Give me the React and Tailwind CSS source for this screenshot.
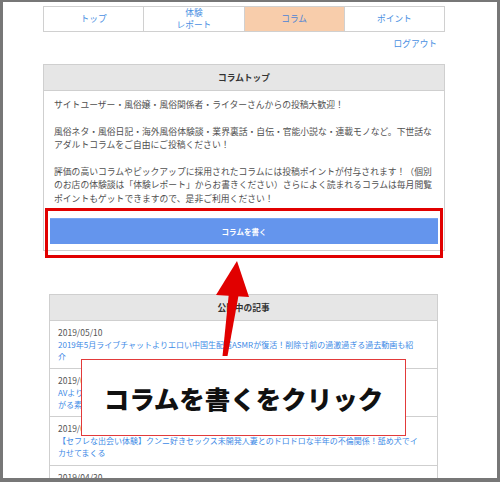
import React from "react";

const jp = "font-['Noto_Sans_CJK_JP','Noto_Sans',sans-serif]";

function Tab({ children, active, last }) {
  return (
    <div
      className={`flex-1 flex flex-col items-center justify-center text-[8.7px] leading-[12.5px] ${
        active ? "bg-[#f8cdab] text-[#4d84d6]" : "bg-white text-[#4a90e2]"
      } ${last ? "" : "border-r border-[#d0d0d0]"}`}
    >
      {children}
    </div>
  );
}

function Item({ date, lines }) {
  return (
    <div className="px-[8px] py-[6px] border-b border-[#cfcfcf] text-[8px] leading-[11.7px]">
      <div className="text-[#555] text-[8.5px]">{date}</div>
      <div className="text-[#3d8ae6] whitespace-nowrap">
        {lines.map((l, i) => (
          <div key={i}>{l}</div>
        ))}
      </div>
    </div>
  );
}

export default function App() {
  return (
    <div className={`relative w-[500px] h-[482px] overflow-hidden bg-[#777] pt-[2px] px-[3px] pb-[4px] ${jp}`}>
      <div className="bg-white h-full overflow-hidden">
        {/* tabs */}
        <div className="ml-[40px] mt-[4px] w-[402px] h-[26px] flex border border-[#d0d0d0]">
          <Tab>トップ</Tab>
          <Tab>
            <span>体験</span>
            <span>レポート</span>
          </Tab>
          <Tab active>コラム</Tab>
          <Tab last>ポイント</Tab>
        </div>

        <div className="ml-[40px] w-[402px] mt-[6px] h-[12px] flex justify-end pr-[8px] text-[8.7px] leading-[12px] text-[#4a90e2]">
          ログアウト
        </div>

        {/* panel 1 */}
        <div className="ml-[40px] w-[402px] mt-[14px] border border-[#cfcfcf]">
          <div className="h-[26px] bg-[#e6e6e6] border-b border-[#cfcfcf] flex items-center justify-center text-[8.7px] font-bold text-[#333]">
            コラムトップ
          </div>
          <div className="px-[6px] pt-[7px] pb-[6px]">
            <div className="px-[4px] text-[8.8px] leading-[13.4px] text-[#505050] whitespace-nowrap">
              <div>サイトユーザー・風俗嬢・風俗関係者・ライターさんからの投稿大歓迎！</div>
              <div className="h-[13.4px]"></div>
              <div>風俗ネタ・風俗日記・海外風俗体験談・業界裏話・自伝・官能小説な・連載モノなど。下世話な</div>
              <div>アダルトコラムをご自由にご投稿ください！</div>
              <div className="h-[13.4px]"></div>
              <div>評価の高いコラムやピックアップに採用されたコラムには投稿ポイントが付与されます！（個別</div>
              <div>のお店の体験談は「体験レポート」からお書きください）さらによく読まれるコラムは毎月閲覧</div>
              <div>ポイントもゲットできますので、是非ご利用ください！</div>
            </div>
            <div className="mt-[13px] h-[26px] bg-[#6495ed] border-t border-[#79a6f2] flex items-center justify-center text-white text-[7.5px] font-bold">
              コラムを書く
            </div>
          </div>
        </div>

        {/* panel 2 */}
        <div className="ml-[46px] w-[389px] mt-[43px] border border-[#cfcfcf]">
          <div className="h-[26px] bg-[#e6e6e6] border-b border-[#cfcfcf] flex items-center justify-center text-[8.7px] font-bold text-[#333]">
            公開中の記事
          </div>
          <Item
            date="2019/05/10"
            lines={[
              "2019年5月ライブチャットよりエロい中国生配信ASMRが復活！削除寸前の過激過ぎる過去動画も紹",
              "介",
            ]}
          />
          <Item
            date="2019/05/07"
            lines={[
              "AVよりもエロい！ライブチャットで見つけた過激すぎるオナニー配信に群",
              "がる素人男性たち",
            ]}
          />
          <Item
            date="2019/05/01"
            lines={[
              "【セフレな出会い体験】クンニ好きセックス未開発人妻とのドロドロな半年の不倫関係！舐め犬でイ",
              "カせてまくる",
            ]}
          />
          <Item date="2019/04/30" lines={["デリヘル嬢と本気のお付き合い体験談"]} />
        </div>
      </div>

      {/* annotation: red box */}
      <div className="absolute left-[45px] top-[208px] w-[398px] h-[50px] border-[3px] border-[#e10000]"></div>

      {/* arrow */}
      <svg className="absolute left-0 top-0" width="500" height="482" viewBox="0 0 500 482">
        <polygon points="237,261 216,295 249,297" fill="#e10000" />
        <polygon points="229,292 239,293 227.5,356 222.5,356" fill="#e10000" />
      </svg>

      {/* callout */}
      <div className="absolute left-[81px] top-[359px] w-[325px] h-[77px] bg-white border-[1.5px] border-[#e23a3a] flex items-center justify-center">
        <span className="text-[25.5px] font-black text-[#111] leading-none">
          コラムを書くをクリック
        </span>
      </div>
    </div>
  );
}
